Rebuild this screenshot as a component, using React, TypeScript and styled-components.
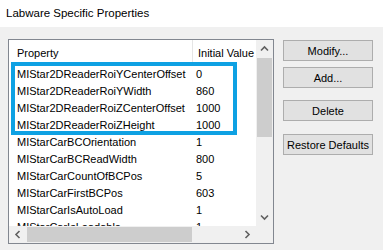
import React from 'react';
import styled, {createGlobalStyle} from 'styled-components';

const GlobalStyle = createGlobalStyle`
  html, body {
    margin: 0;
    padding: 0;
    background: #f0f0f0;
  }
  body {
    font-family: "Liberation Sans", Arial, sans-serif;
    font-size: 11px;
    color: #000;
  }
`;

const Window = styled.div`
  width: 383px;
  height: 250px;
  background: #f0f0f0;
  overflow: hidden;
`;

const TitleBar = styled.div`
  height: 27px;
  background: #fff;
  padding-left: 6px;
  font-size: 11.5px;
  line-height: 26px;
  box-sizing: border-box;
`;

const Content = styled.div`
  display: flex;
  align-items: flex-start;
  padding: 12px 0 0 8px;
`;

const ListBox = styled.div`
  position: relative;
  width: 266px;
  height: 205px;
  box-sizing: border-box;
  border: 1px solid #828790;
  background: #fff;
  display: grid;
  grid-template-columns: 1fr 17px;
  grid-template-rows: 1fr 17px;
`;

const Viewport = styled.div`
  overflow: hidden;
  background: #fff;
`;

const Header = styled.div`
  display: flex;
  height: 26px;
  line-height: 26px;
  white-space: nowrap;
`;

const HeaderCell = styled.div<{ $width: number; $divider?: boolean }>`
  flex: 0 0 ${p => p.$width}px;
  box-sizing: border-box;
  padding-left: ${p => (p.$divider ? 8 : 5)}px;
  border-right: ${p => (p.$divider ? '1px solid #e5e5e5' : 'none')};
  height: 24px;
`;

const Row = styled.div`
  display: flex;
  height: 17px;
  line-height: 17px;
  white-space: nowrap;
`;

const Cell = styled.div<{ $width: number; $pad: number }>`
  flex: 0 0 ${p => p.$width}px;
  box-sizing: border-box;
  padding-left: ${p => p.$pad}px;
`;

const VScroll = styled.div`
  background: #f0f0f0;
  display: flex;
  flex-direction: column;
`;

const HScroll = styled.div`
  background: #f0f0f0;
  display: flex;
  align-items: center;
`;

const Corner = styled.div`
  background: #f0f0f0;
`;

const ArrowButton = styled.div`
  flex: 0 0 17px;
  width: 17px;
  height: 17px;
  display: flex;
  align-items: center;
  justify-content: center;
`;

const VThumb = styled.div`
  margin: 1px 1px 0 1px;
  height: 79px;
  background: #cdcdcd;
`;

const Spacer = styled.div`
  flex: 1;
`;

const HThumb = styled.div`
  margin-left: 1px;
  width: 165px;
  height: 15px;
  background: #cdcdcd;
`;

// annotation frame drawn over the first four rows
const Highlight = styled.div`
  position: absolute;
  left: 2px;
  top: 22px;
  width: 226px;
  height: 73px;
  box-sizing: border-box;
  border: 4px solid #0ea1e3;
  pointer-events: none;
`;

const Buttons = styled.div`
  display: flex;
  flex-direction: column;
  margin-left: 9px;
  padding-top: 1px;
`;

const Button = styled.button<{ $gap: number }>`
  width: 90px;
  height: 21px;
  margin-top: ${p => p.$gap}px;
  padding: 0;
  border: 1px solid #adadad;
  background: #e1e1e1;
  font-family: "Liberation Sans", Arial, sans-serif;
  font-size: 11px;
  color: #000;
`;

const rows: [string, string][] = [
    ['MIStar2DReaderRoiYCenterOffset', '0'],
    ['MIStar2DReaderRoiYWidth', '860'],
    ['MIStar2DReaderRoiZCenterOffset', '1000'],
    ['MIStar2DReaderRoiZHeight', '1000'],
    ['MIStarCarBCOrientation', '1'],
    ['MIStarCarBCReadWidth', '800'],
    ['MIStarCarCountOfBCPos', '5'],
    ['MIStarCarFirstBCPos', '603'],
    ['MIStarCarIsAutoLoad', '1'],
    ['MIStarCarIsLoadable', '1'],
];

const Chevron = ({dir}: { dir: 'up' | 'down' | 'left' | 'right' }) => {
    const rot = {up: 0, right: 90, down: 180, left: 270}[dir];
    return (
        <svg width="9" height="9" viewBox="0 0 9 9">
            <path d="M1 6.5 L4.5 3 L8 6.5" fill="none" stroke="#606060" strokeWidth="1.6"
                  transform={`rotate(${rot} 4.5 4.5)`}/>
        </svg>
    );
};

export default function App() {
    return (
        <Window>
            <GlobalStyle/>
            <TitleBar>Labware Specific Properties</TitleBar>
            <Content>
                <ListBox>
                    <Viewport>
                        <Header>
                            <HeaderCell $width={184} $divider>Property</HeaderCell>
                            <HeaderCell $width={90}>Initial Value</HeaderCell>
                        </Header>
                        {rows.map(([name, value]) => (
                            <Row key={name}>
                                <Cell $width={184} $pad={8}>{name}</Cell>
                                <Cell $width={90} $pad={3}>{value}</Cell>
                            </Row>
                        ))}
                    </Viewport>
                    <VScroll>
                        <ArrowButton><Chevron dir="up"/></ArrowButton>
                        <VThumb/>
                        <Spacer/>
                        <ArrowButton><Chevron dir="down"/></ArrowButton>
                    </VScroll>
                    <HScroll>
                        <ArrowButton><Chevron dir="left"/></ArrowButton>
                        <HThumb/>
                        <Spacer/>
                        <ArrowButton><Chevron dir="right"/></ArrowButton>
                    </HScroll>
                    <Corner/>
                    <Highlight/>
                </ListBox>
                <Buttons>
                    <Button $gap={0}>Modify...</Button>
                    <Button $gap={6}>Add...</Button>
                    <Button $gap={12}>Delete</Button>
                    <Button $gap={13}>Restore Defaults</Button>
                </Buttons>
            </Content>
        </Window>
    );
}
